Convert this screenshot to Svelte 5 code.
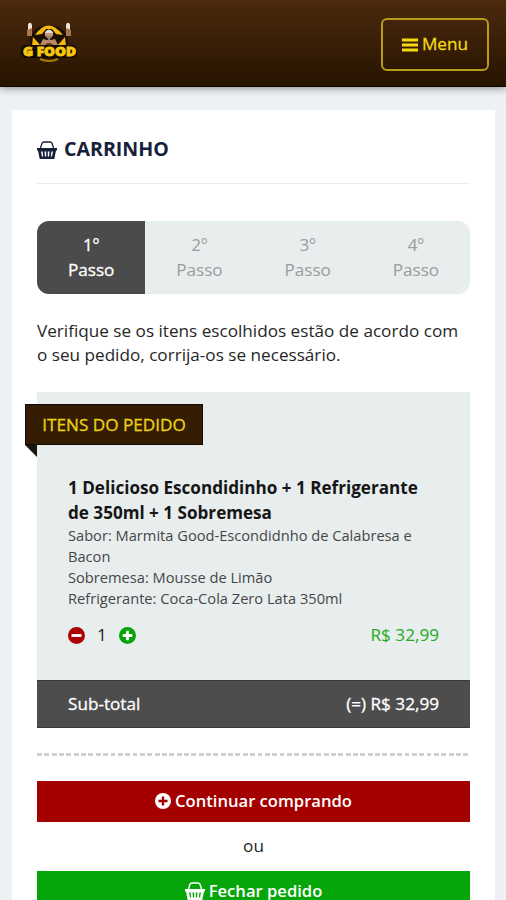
<script>
    const steps = [1, 2, 3, 4];
    let currentStep = 1;
    let quantity = 1;
    const unitPrice = 32.99;

    const details = [
        'Sabor: Marmita Good-Escondidnho de Calabresa e Bacon',
        'Sobremesa: Mousse de Limão',
        'Refrigerante: Coca-Cola Zero Lata 350ml'
    ];

    function formatPrice(value) {
        return 'R$ ' + value.toFixed(2).replace('.', ',');
    }

    function decrease() {
        if (quantity > 1) quantity--;
    }

    function increase() {
        quantity++;
    }

    $: total = formatPrice(quantity * unitPrice);
</script>

<div class="page">
    <header>
        <svg class="logo" viewBox="0 0 58 44" width="58" height="44">
            <ellipse cx="29" cy="20" rx="19" ry="16" fill="#1a0d02" />
            <path d="M15 14Q28-5 43 14L36 13L32 8H26L22 13Z" fill="#f3b90c" />
            <path d="M12 25L13 16L21 25ZM46 25L45 16L37 25Z" fill="#f3b90c" />
            <path d="M20 24L23 18L27 19H31L35 18L38 24L34 26H24Z" fill="#b98a64" />
            <path d="M23 26L27 22L31 22L35 26Z" fill="#5b3d2b" />
            <circle cx="29" cy="13" r="4.2" fill="#c39873" />
            <path d="M24.500 12Q29 5 33.500 12Z" fill="#e6ddcf" />
            <path d="M26 15H32L29 20Z" fill="#8f8277" />
            <path d="M8 3Q11 0 12 4V14H8V8ZM50 3Q47 0 46 4V14H50V8Z" fill="#e9e4dc" />
            <path d="M7 9L12 7V15H7ZM51 9L46 7V15H51Z" fill="#a87450" />
            <rect x="1" y="24" width="56" height="13" rx="5" fill="#140a02" />
            <text x="3" y="35" textLength="53" lengthAdjust="spacingAndGlyphs">G FOOD</text>
            <path d="M20 38Q29 42 38 38" fill="none" stroke="#a97c05" stroke-width="2" />
        </svg>
        <button class="menu">
            <svg viewBox="0 0 16 14" width="16" height="14">
                <path d="M0 2H16M0 7H16M0 12H16" stroke="currentColor" stroke-width="2.800" />
            </svg>
            <span>Menu</span>
        </button>
    </header>

    <main>
        <h1>
            <svg viewBox="0 0 20 18" width="20" height="18">
                <path d="M3.500 7L5 2.300Q5.500 1 7 1H13Q14.500 1 15 2.300L16.500 7" fill="none" stroke="currentColor" stroke-width="1.300" />
                <path fill-rule="evenodd" d="M0 7H20V9.500H19L17.300 18H2.700L1 9.500H0ZM4 10.500L5 15.500H6.200L5.600 10.500ZM7.500 10.500L7.900 15.500H9.200V10.500ZM10.800 10.500V15.500H12.100L12.500 10.500ZM14.400 10.500L13.800 15.500H15L16 10.500Z" fill="currentColor" />
            </svg>
            <span>CARRINHO</span>
        </h1>

        <div class="steps">
            {#each steps as step}
                <div class="step {step === currentStep ? 'active' : ''}">
                    <span>{step}º</span>
                    <span>Passo</span>
                </div>
            {/each}
        </div>

        <p class="intro">Verifique se os itens escolhidos estão de acordo com<br />o seu pedido, corrija-os se necessário.</p>

        <section class="order">
            <h2>ITENS DO PEDIDO</h2>
            <div class="item">
                <h3>1 Delicioso Escondidinho + 1 Refrigerante de 350ml + 1 Sobremesa</h3>
                {#each details as detail}
                    <p>{detail}</p>
                {/each}
                <div class="item-row">
                    <button class="round minus" aria-label="Remover" on:click={decrease}>
                        <svg viewBox="0 0 17 17" width="17" height="17">
                            <circle cx="8.500" cy="8.500" r="8.500" fill="currentColor" />
                            <path d="M3.500 8.500H13.500" stroke="#fff" stroke-width="2.800" />
                        </svg>
                    </button>
                    <span class="quantity">{quantity}</span>
                    <button class="round plus" aria-label="Adicionar" on:click={increase}>
                        <svg viewBox="0 0 17 17" width="17" height="17">
                            <circle cx="8.500" cy="8.500" r="8.500" fill="currentColor" />
                            <path d="M3.700 8.500H13.300M8.500 3.700V13.300" stroke="#fff" stroke-width="2.800" />
                        </svg>
                    </button>
                    <span class="price">{total}</span>
                </div>
            </div>
            <div class="subtotal">
                <span>Sub-total</span>
                <span>(=) {total}</span>
            </div>
        </section>

        <div class="divider"></div>

        <button class="action continue">
            <svg viewBox="0 0 17 17" width="16" height="16">
                <circle cx="8.500" cy="8.500" r="8.500" fill="#fff" />
                <path d="M3.700 8.500H13.300M8.500 3.700V13.300" stroke="#a40000" stroke-width="2.500" />
            </svg>
            <span>Continuar comprando</span>
        </button>
        <div class="or">ou</div>
        <button class="action finish">
            <svg viewBox="0 0 20 18" width="20" height="18">
                <path d="M3.500 7L5 2.300Q5.500 1 7 1H13Q14.500 1 15 2.300L16.500 7" fill="none" stroke="currentColor" stroke-width="1.500" />
                <path fill-rule="evenodd" d="M0 7H20V9.500H19L17.300 18H2.700L1 9.500H0ZM4 10.500L5 15.500H6.200L5.600 10.500ZM7.500 10.500L7.900 15.500H9.200V10.500ZM10.800 10.500V15.500H12.100L12.500 10.500ZM14.400 10.500L13.800 15.500H15L16 10.500Z" fill="currentColor" />
            </svg>
            <span>Fechar pedido</span>
        </button>
    </main>
</div>

<style>
    :global(body) {
        background: #edf0f4;
    }

    .page {
        height: 900px;
        overflow: hidden;
        background: #edf0f4;
        color: #262626;
        font-family: 'Open Sans', sans-serif;
        font-size: 17.15px;
        line-height: 24.5px;
    }

    button {
        border: none;
        font: inherit;
        cursor: pointer;
    }

    svg {
        flex-shrink: 0;
    }

    header {
        display: flex;
        justify-content: space-between;
        align-items: center;
        box-sizing: border-box;
        height: 87px;
        padding: 0 17px 0 20px;
        background: linear-gradient(#4b2a0d, #261300);
        border-bottom: 1px solid #100800;
        box-shadow: 0 1px 8px rgba(0, 0, 0, 0.45);
    }

    .logo text {
        font: 900 12px 'Open Sans', sans-serif;
        fill: #f8c80e;
        stroke: #f8c80e;
        stroke-width: 0.8px;
    }

    .menu {
        display: flex;
        align-items: center;
        justify-content: center;
        gap: 4px;
        width: 108px;
        height: 53px;
        margin-top: 3px;
        padding: 0;
        border: 2px solid #b89b1c;
        border-radius: 6px;
        background: none;
        color: #f5d90f;
        -webkit-text-stroke: 0.3px;
    }

    main {
        box-sizing: border-box;
        height: 850px;
        margin: 23px 11px 0 12px;
        padding: 25px 25px 0;
        background: #fff;
    }

    h1 {
        display: flex;
        align-items: center;
        gap: 7px;
        height: 48px;
        margin: 0 0 37px;
        border-bottom: 1px solid #eceeee;
        color: #16213a;
        font-size: 19.6px;
        font-weight: 700;
    }

    h1 span {
        margin-top: -19px;
    }

    h1 svg {
        margin-top: -18px;
    }

    .steps {
        display: grid;
        grid-template-columns: repeat(4, 1fr);
        height: 73px;
        border-radius: 12px;
        background: #e8eded;
        overflow: hidden;
    }

    .step {
        display: flex;
        flex-direction: column;
        justify-content: center;
        text-align: center;
        color: #9a9d9d;
    }

    .step.active {
        background: #4b4b4b;
        color: #fff;
        -webkit-text-stroke: 0.3px;
    }

    .intro {
        margin: 24.5px 0;
        white-space: nowrap;
    }

    .order {
        background: #e8eded;
    }

    h2 {
        position: relative;
        top: 12px;
        box-sizing: border-box;
        width: 178px;
        height: 41px;
        margin: 0 0 0 -12px;
        border: 1px solid #160b00;
        background: #351d03;
        color: #ead315;
        font-size: 17.15px;
        font-weight: 400;
        line-height: 39px;
        text-align: center;
        white-space: nowrap;
        -webkit-text-stroke: 0.3px;
    }

    h2::after {
        content: '';
        position: absolute;
        top: 40px;
        left: -1px;
        border-top: 12px solid #1d1710;
        border-left: 12px solid transparent;
    }

    .item {
        box-sizing: border-box;
        height: 247px;
        padding: 43px 31px 0;
    }

    h3 {
        margin: 0;
        color: #161616;
        font-size: 17.1px;
        font-weight: 700;
    }

    .item p {
        margin: 0;
        color: #454747;
        font-size: 14.65px;
        line-height: 21px;
    }

    .item-row {
        display: flex;
        align-items: center;
        margin-top: 14px;
    }

    .round {
        display: flex;
        padding: 0;
        border-radius: 50%;
        background: none;
    }

    .minus {
        color: #a90303;
    }

    .plus {
        color: #06a30a;
    }

    .quantity {
        width: 34px;
        text-align: center;
    }

    .price {
        margin-left: auto;
        color: #1cac20;
    }

    .subtotal {
        display: flex;
        justify-content: space-between;
        align-items: center;
        box-sizing: border-box;
        height: 48px;
        padding: 0 31px;
        border: 1px solid #393939;
        border-width: 1px 0;
        background: #4d4d4d;
        color: #fff;
        -webkit-text-stroke: 0.3px;
    }

    .divider {
        height: 3px;
        margin: 25px 0 24.5px;
        background: repeating-linear-gradient(90deg, #d0d0d0 0 4.9px, #fff 4.9px 7.35px);
    }

    .action {
        display: flex;
        align-items: center;
        justify-content: center;
        gap: 4px;
        width: 100%;
        height: 41px;
        padding: 0;
        color: #fff;
        font-size: 16.6px;
        font-weight: 600;
    }

    .continue {
        background: #a40000;
    }

    .finish {
        background: #06a60b;
    }

    .or {
        height: 49px;
        line-height: 48px;
        text-align: center;
    }
</style>
